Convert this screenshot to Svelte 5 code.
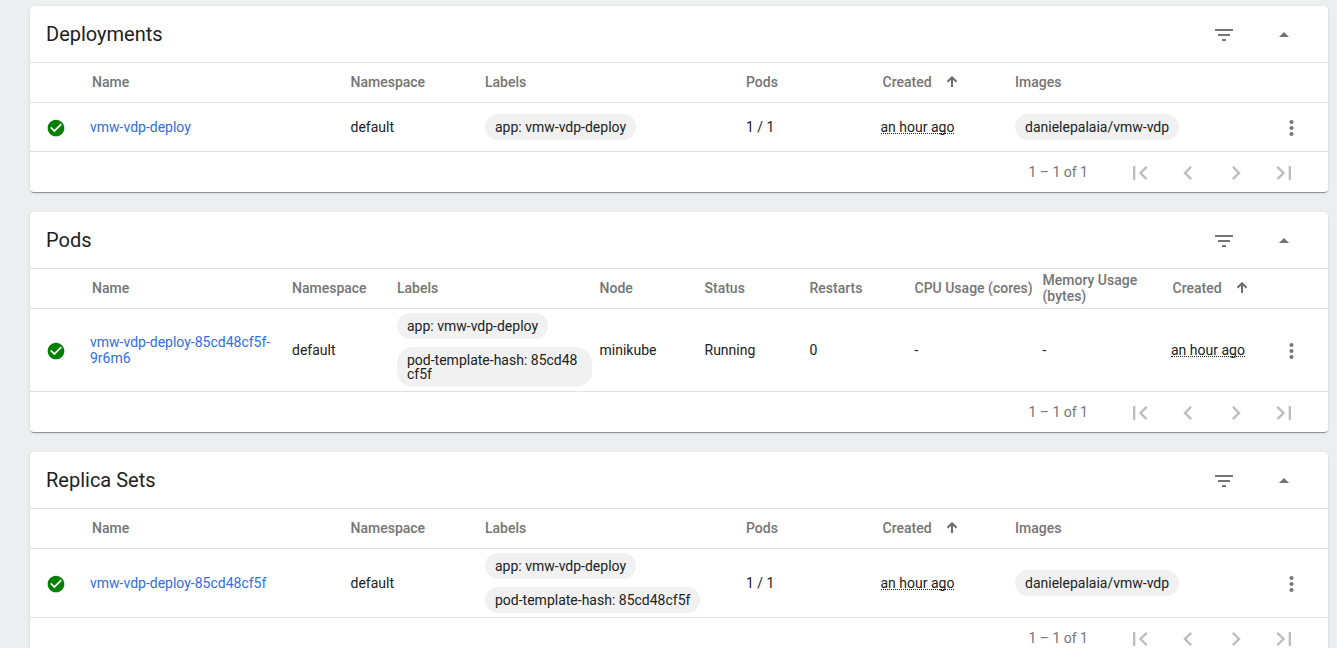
<script>
  const labels = ['app: vmw-vdp-deploy', 'pod-template-hash: 85cd48cf5f'];
  const wide = ['Name', 'Namespace', 'Labels', 'Pods', 'Created', 'Images'];
  const cards = [
    {
      title: 'Deployments',
      kind: 'wide',
      heads: wide,
      cells: ['vmw-vdp-deploy', 'default', labels.slice(0, 1), '1 / 1', 'an hour ago', ['danielepalaia/vmw-vdp']]
    },
    {
      title: 'Pods',
      kind: 'dense',
      heads: ['Name', 'Namespace', 'Labels', 'Node', 'Status', 'Restarts', 'CPU Usage (cores)', 'Memory Usage (bytes)', 'Created'],
      cells: ['vmw-vdp-deploy-85cd48cf5f-9r6m6', 'default', labels, 'minikube', 'Running', '0', '-', '-', 'an hour ago']
    },
    {
      title: 'Replica Sets',
      kind: 'wide',
      heads: wide,
      cells: ['vmw-vdp-deploy-85cd48cf5f', 'default', labels, '1 / 1', 'an hour ago', ['danielepalaia/vmw-vdp']]
    }
  ];
  const pagers = [
    'M18.41 16.59L13.82 12l4.59-4.59L17 6l-6 6 6 6zM6 6h2v12H6z',
    'M15.41 7.41L14 6l-6 6 6 6 1.41-1.41L10.83 12z',
    'M10 6L8.59 7.41 13.17 12l-4.58 4.59L10 18l6-6z',
    'M5.59 7.41L10.18 12l-4.59 4.59L7 18l6-6-6-6zM16 6h2v12h-2z'
  ];
</script>

<main>
  {#each cards as card}
    <section class="card">
      <header class="title">
        <h2>{card.title}</h2>
        <svg class="filter" viewBox="0 0 24 24" width="24" height="24"><path d="M10 18h4v-2h-4v2zM3 6v2h18V6H3zm3 7h12v-2H6v2z" /></svg>
        <svg viewBox="0 0 24 24" width="24" height="24"><path d="M7 14l5-5 5 5z" /></svg>
      </header>
      <div class="row head {card.kind}">
        <span></span>
        {#each card.heads as head}
          <span class="h" class:name={head === 'Name'} class:created={head === 'Created'}>
            {head}
            {#if head === 'Created'}
              <svg class="sort" viewBox="0 0 12 12" width="12" height="12"><path d="M6 11V1.4M1.5 5.8L6 1.3l4.5 4.5" /></svg>
            {/if}
          </span>
        {/each}
      </div>
      <div class="row body {card.kind}">
        <svg class="ok" viewBox="0 0 24 24" width="20" height="20"><path d="M12 2C6.48 2 2 6.48 2 12s4.48 10 10 10 10-4.48 10-10S17.52 2 12 2zm-2 15l-5-5 1.41-1.41L10 14.17l7.59-7.59L19 8l-9 9z" /></svg>
        {#each card.cells as cell, i}
          {#if Array.isArray(cell)}
            <div class="chips">
              {#each cell as chip}<span class="chip">{chip}</span>{/each}
            </div>
          {:else if i === 0}
            <a href="#top">{cell}</a>
          {:else if card.heads[i] === 'Created'}
            <span><span class="ago">{cell}</span></span>
          {:else}
            <span>{cell}</span>
          {/if}
        {/each}
        <svg class="menu" viewBox="0.5 0 24 24" width="24" height="24"><path d="M12 8c1.1 0 2-.9 2-2s-.9-2-2-2-2 .9-2 2 .9 2 2 2zm0 2c-1.1 0-2 .9-2 2s.9 2 2 2 2-.9 2-2-.9-2-2-2zm0 6c-1.1 0-2 .9-2 2s.9 2 2 2 2-.9 2-2-.9-2-2-2z" /></svg>
      </div>
      <footer>
        <span class="range">1 – 1 of 1</span>
        {#each pagers as d}
          <span class="page"><svg viewBox="0 0 24 24" width="28" height="28"><path {d} /></svg></span>
        {/each}
      </footer>
    </section>
  {/each}
</main>

<style>
  :global(body) {
    background: #edeef0;
  }
  main {
    box-sizing: border-box;
    height: 648px;
    overflow: hidden;
    padding: 6px 9px 0 30px;
    display: flex;
    flex-direction: column;
    gap: 20px;
    font: 400 14px/16px Roboto, sans-serif;
    color: #212121;
  }
  svg {
    display: block;
    flex: none;
    fill: #757575;
  }
  .card {
    flex: none;
    background: #fff;
    border-radius: 4px;
    box-shadow: 0 2px 0 -1px #929395, 0 1px 1px rgba(0, 0, 0, 0.1), 0 1px 3px rgba(0, 0, 0, 0.12);
  }
  .title {
    height: 56px;
    display: flex;
    align-items: center;
    padding: 0 32px 0 16px;
    border-bottom: 1px solid #e0e0e0;
  }
  h2 {
    flex: 1;
    margin: 0;
    font-size: 20px;
    line-height: 24px;
    font-weight: 400;
  }
  .title svg {
    position: relative;
    top: 1px;
  }
  .filter {
    margin-right: 36px;
  }
  .row {
    display: grid;
    align-items: center;
    border-bottom: 1px solid #e0e0e0;
  }
  .wide {
    grid-template-columns: 60px 260.5px 134.5px 261px 134.5px 134.5px 264.5px 24px;
  }
  .dense {
    grid-template-columns: 60px 202px 105px 202.5px 105px 105px 105px 128px 128.5px 108.5px 24px;
  }
  .head {
    box-sizing: border-box;
    height: 40px;
    padding-bottom: 1px;
    font-weight: 500;
    color: #757575;
  }
  .name {
    padding-left: 2px;
  }
  .created {
    display: flex;
    align-items: center;
    gap: 14px;
    padding-left: 2px;
  }
  .dense .created {
    padding-left: 1.5px;
  }
  .sort {
    fill: none;
    stroke: #6c6c6c;
    stroke-width: 2;
  }
  .body {
    min-height: 48px;
  }
  .ok {
    fill: #008000;
    margin: 1px 0 0 16px;
  }
  .menu {
    margin-top: 1px;
  }
  a {
    color: #326de6;
    text-decoration: none;
    padding-right: 12px;
  }
  .chips {
    display: flex;
    flex-direction: column;
    align-items: flex-start;
    gap: 8px;
    padding: 4px 8px 4px 0;
  }
  .chip {
    background: #f1f1f1;
    border-radius: 16px;
    padding: 6px 10px;
    line-height: 14px;
    word-break: break-all;
  }
  .ago {
    display: inline-block;
    line-height: 11px;
    border-bottom: 1px dotted #212121;
  }
  footer {
    height: 40px;
    display: flex;
    align-items: center;
    justify-content: flex-end;
    padding-right: 20px;
    color: #757575;
  }
  .range {
    margin-right: 28px;
  }
  .page {
    width: 48px;
    display: flex;
    justify-content: center;
    padding-top: 2px;
  }
  .page svg {
    fill: #bdbdbd;
  }
</style>
